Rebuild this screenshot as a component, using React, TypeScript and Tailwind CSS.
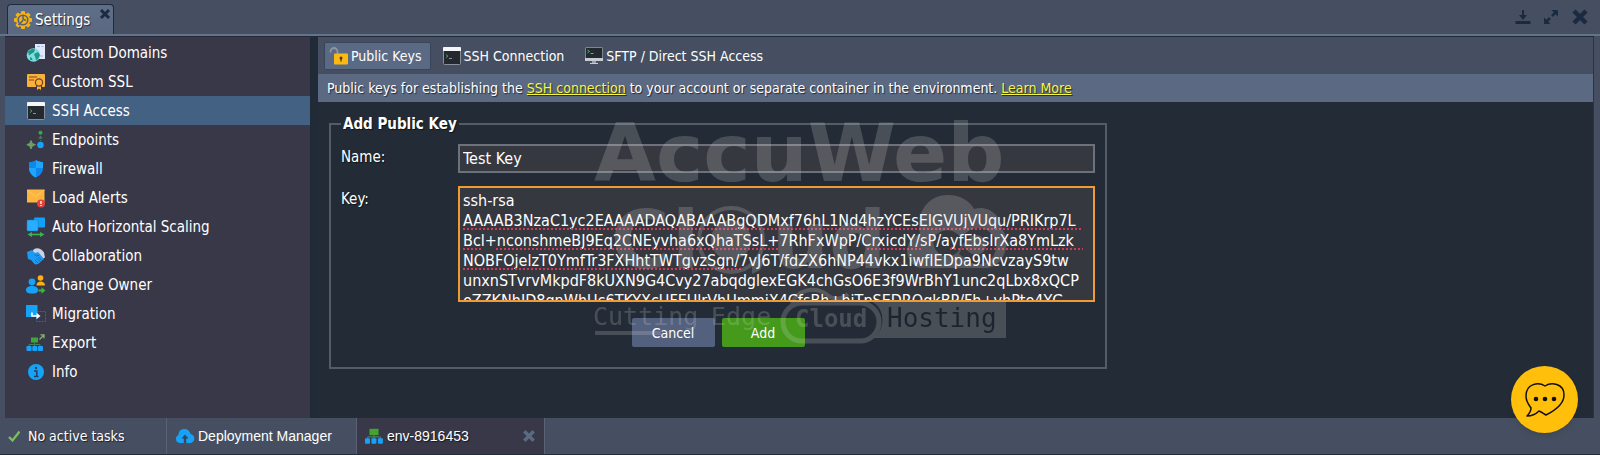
import { useState, type ReactNode } from 'react';
import clsx from 'clsx';

const PUBLIC_KEY = [
  'ssh-rsa',
  'AAAAB3NzaC1yc2EAAAADAQABAAABgQDMxf76hL1Nd4hzYCEsEIGVUjVUqu/PRIKrp7L',
  'Bcl+nconshmeBJ9Eq2CNEyvha6xQhaTSsL+7RhFxWpP/CrxicdY/sP/ayfEbsIrXa8YmLzk',
  'NOBFOjelzT0YmfTr3FXHhtTWTgvzSgn/7vJ6T/fdZX6hNP44vkx1iwfIEDpa9NcvzayS9tw',
  'unxnSTvrvMkpdF8kUXN9G4Cvy27abqdglexEGK4chGsO6E3f9WrBhY1unc2qLbx8xQCP',
  'eZZKNhID8gnWhUc6TKYXcUFEUlrVhUmmjX4CfsBh+hiTpSEDROgkBP/Fh+vhPte4YG',
].join('\n');

const Icon = ({ children, size = 20 }: { children: ReactNode; size?: number }) => (
  <svg width={size} height={size} viewBox="0 0 20 20" fill="none" className="shrink-0" aria-hidden="true">
    {children}
  </svg>
);

const GearIcon = () => (
  <Icon>
    <g fill="#f9b10e">
      <rect x="8" y="1" width="4" height="18" rx="1" />
      <rect x="8" y="1" width="4" height="18" rx="1" transform="rotate(45 10 10)" />
      <rect x="8" y="1" width="4" height="18" rx="1" transform="rotate(90 10 10)" />
      <rect x="8" y="1" width="4" height="18" rx="1" transform="rotate(135 10 10)" />
      <circle cx="10" cy="10" r="7" />
    </g>
    <circle cx="10" cy="10" r="4.8" stroke="#55627b" strokeWidth="1.6" />
    <path d="M5.5 15l4.6-4.8" stroke="#55627b" strokeWidth="1.6" />
    <path d="M10 5v4l3 1.6" stroke="#55627b" strokeWidth="1.5" />
  </Icon>
);

const DomainsIcon = () => (
  <Icon>
    <path d="M9 1h10v15h-7L9 12z" fill="#dfe9fb" />
    <path d="M11 3.5h3M15.5 3.5h2M13 13h4" stroke="#9fb3d8" strokeWidth="1" />
    <circle cx="7.5" cy="12" r="6.8" fill="#7fdbe6" />
    <path d="M2 8.5l4-2.7 3 .8-1 2.6-2.6 1.6L3 12.5zM8 11l4-2 2 3-2 4-2 1.4-.6-3zM4 14l2 1 .5 2.6L4 16.5z" fill="#1d9a7c" />
  </Icon>
);

const CertificateIcon = () => (
  <Icon>
    <rect x="1" y="2" width="18" height="13" rx="1" fill="#fbb03b" />
    <path d="M3 5h8M3 8h5" stroke="#7a4b1a" strokeWidth="1.2" />
    <path d="M10.5 13v6l2.5-2 2.5 2v-6z" fill="#fbb03b" stroke="#393849" strokeWidth="1" />
    <circle cx="13" cy="10.5" r="3.6" fill="#fbb03b" stroke="#6b4420" strokeWidth="1.2" />
  </Icon>
);

const TerminalIcon = () => (
  <Icon>
    <rect x="1.5" y="1.5" width="17" height="17" rx="1" fill="#23292f" stroke="#8a919b" />
    <path d="M1 2a1 1 0 0 1 1-1h16a1 1 0 0 1 1 1v3H1z" fill="#f3f5f8" />
    <path d="M4 8.5l2 1.6-2 1.6" stroke="#4f9463" strokeWidth="1" />
    <path d="M7 12.5h3" stroke="#8c929b" strokeWidth="1" />
  </Icon>
);

const MonitorIcon = () => (
  <Icon>
    <rect x="1.5" y="1.5" width="17" height="12" rx="0.5" fill="#23292f" stroke="#7d8590" />
    <rect x="1" y="12" width="18" height="3" fill="#c8ccd2" />
    <path d="M8 15h4v2h-4z" fill="#9aa1ab" />
    <path d="M6 17.5h8" stroke="#c8ccd2" />
    <path d="M3.5 4l2 1.4-2 1.4" stroke="#4fc06a" />
    <path d="M6.5 7.5h3" stroke="#4fc06a" />
  </Icon>
);

const LockIcon = () => (
  <Icon>
    <path d="M1.5 6.5V5.5a3.500 3.500 0 0 1 7 0V8" stroke="#8f96a3" strokeWidth="1.800" />
    <rect x="5" y="7.500" width="14" height="11" rx="1" fill="#fdb913" />
    <circle cx="12" cy="12" r="1.5" fill="#4d3a12" />
    <path d="M12 12v3.6" stroke="#4d3a12" strokeWidth="1.2" />
  </Icon>
);

const EndpointsIcon = () => (
  <Icon>
    <circle cx="14.5" cy="2.8" r="2" fill="#39a84a" />
    <path d="M14.5 5.500l-2.500 3h5z" fill="#58705f" />
    <path d="M14.5 8v4M9 14.7h3" stroke="#58705f" strokeDasharray="1 1" />
    <path d="M5 10.500l1.300 2.900 2.900 1.300-2.900 1.300L5 19l-1.300-3-2.900-1.300 2.900-1.300z" fill="#6f9d63" stroke="#6f9d63" />
    <circle cx="14.5" cy="15" r="3.2" fill="#15a3fa" />
  </Icon>
);

const ShieldIcon = () => (
  <Icon>
    <path d="M10 1c2 1.400 4.500 2 7 2v6c0 5-3.500 8-7 9.500C6.500 17 3 14 3 9V3c2.500 0 5-.6 7-2z" fill="#0d86ee" />
    <path d="M10 1c2 1.400 4.500 2 7 2v6h-7zM3 9h7v9.500C6.500 17 3.500 14.500 3 9z" fill="#1fa5fc" />
  </Icon>
);

const AlertIcon = () => (
  <Icon>
    <rect x="1" y="1.500" width="17.500" height="13" rx="0.500" fill="#fcb53f" />
    <path d="M1 2l8.700 6.500L18.500 2" stroke="#ffc765" strokeWidth="1" />
    <circle cx="15" cy="15.500" r="4" fill="#e0413a" />
    <path d="M15 13v3M15 17v1" stroke="#fff" strokeWidth="1.400" />
  </Icon>
);

const ScalingIcon = () => (
  <Icon>
    <rect x="8" y="0.500" width="11" height="10" rx="1" fill="#12a0fa" />
    <rect x="1" y="3" width="11" height="11" rx="1" fill="#27aefe" stroke="#2a74b8" strokeWidth="0.500" />
    <path d="M5 17.500h10" stroke="#39b54a" strokeWidth="1.600" />
    <path d="M6 15v5l-4.500-2.500zM14 15v5l4.500-2.500z" fill="#39b54a" />
  </Icon>
);

const HandshakeIcon = () => (
  <Icon>
    <path d="M6.500 5.500C8 1.500 14 .8 18 6.500l1 5-2 1-4-5-4 .5z" fill="#c9d3e2" />
    <path d="M1 6l5-2 3 3 3-1 6 7-2 1.500-2 2-2 1.500-3 .5L5 14l-3-1z" fill="#1a9bf7" />
    <path d="M8.500 8.500l2 1.500 2.500-1M9 14l3 3M11 12.500l3 3M12.500 11l3 3" stroke="#2a5f9c" strokeWidth="0.900" />
  </Icon>
);

const OwnerIcon = () => (
  <Icon>
    <circle cx="14.500" cy="3" r="2.800" fill="#fbb016" />
    <path d="M10.500 10.500c0-3 2-4 4-4s4.500 1 4.500 4z" fill="#fbb016" />
    <circle cx="6" cy="6.800" r="3.400" fill="#15a3fa" />
    <path d="M0 15c0-3 3-4 6-4s6 1 6 4c0 3-3 3.500-6 3.500S0 18 0 15z" fill="#15a3fa" />
    <path d="M12.500 15.500h4" stroke="#39b54a" strokeWidth="2" />
    <path d="M15.500 12.200v6.600l4-3.300z" fill="#39b54a" />
  </Icon>
);

const MigrationIcon = () => (
  <Icon>
    <rect x="10.500" y="7.500" width="9" height="10" stroke="#2a6d9e" strokeDasharray="2 1" />
    <rect x="0" y="1" width="11.500" height="12" rx="0.500" fill="#15a3fa" />
    <path d="M6 8.500v3.500h5" stroke="#fff" strokeWidth="1.600" />
    <path d="M10.500 8.700v6.600l4-3.300z" fill="#fff" />
  </Icon>
);

const ExportIcon = () => (
  <Icon>
    <rect x="5" y="4.500" width="7" height="5" fill="#39a935" />
    <path d="M8.500 9v5M3 14v-2.500h11V14" stroke="#4a7a55" />
    <path d="M13.500 6.500l4.500-4.500M14.500 1.800H18v3.500" stroke="#7fb56d" strokeWidth="1.300" />
    <rect x="0.500" y="13" width="5" height="5" rx="1" fill="#15a3fa" />
    <rect x="6.300" y="13" width="5" height="5" rx="1" fill="#15a3fa" />
    <rect x="12" y="13" width="5" height="5" rx="1" fill="#15a3fa" />
  </Icon>
);

const InfoIcon = () => (
  <Icon>
    <circle cx="10" cy="10" r="8" fill="#15a3fa" />
    <path d="M8 9h2.800v5M8 14.500h4.500" stroke="#23405e" strokeWidth="1.600" />
    <circle cx="10" cy="6" r="1.200" fill="#23405e" />
  </Icon>
);

const EnvIcon = () => (
  <Icon size={18}>
    <rect x="5" y="2" width="10" height="7" fill="#43a52f" />
    <path d="M10 9v4M3 13v-2h14v2" stroke="#5b8f62" />
    <rect x="0" y="12.500" width="5.500" height="6" rx="1" fill="#15a3fa" />
    <rect x="7.200" y="12.500" width="5.500" height="6" rx="1" fill="#15a3fa" />
    <rect x="14.400" y="12.500" width="5.500" height="6" rx="1" fill="#15a3fa" />
  </Icon>
);

const CloudUploadIcon = () => (
  <Icon>
    <path d="M4.500 17A4.200 4.200 0 0 1 3.500 9C3.500 5 6 3 9.500 3c3.200 0 5.500 2 6 5 2.200.3 3.800 2 3.800 4.500S17.500 17 15 17z" fill="#15a3fa" />
    <path d="M10 17v-5" stroke="#3b4558" strokeWidth="2.400" />
    <path d="M6.500 12.500L10 8.500l3.500 4z" fill="#3b4558" />
  </Icon>
);

const CrossIcon = ({ className, size }: { className: string; size: number }) => (
  <svg width={size} height={size} viewBox="0 0 12 12" className={className} aria-hidden="true">
    <path d="M2 2l8 8M10 2l-8 8" stroke="currentColor" strokeWidth="3" />
  </svg>
);

const menuItems = [
  { label: 'Custom Domains', icon: <DomainsIcon /> },
  { label: 'Custom SSL', icon: <CertificateIcon /> },
  { label: 'SSH Access', icon: <TerminalIcon /> },
  { label: 'Endpoints', icon: <EndpointsIcon /> },
  { label: 'Firewall', icon: <ShieldIcon /> },
  { label: 'Load Alerts', icon: <AlertIcon /> },
  { label: 'Auto Horizontal Scaling', icon: <ScalingIcon /> },
  { label: 'Collaboration', icon: <HandshakeIcon /> },
  { label: 'Change Owner', icon: <OwnerIcon /> },
  { label: 'Migration', icon: <MigrationIcon /> },
  { label: 'Export', icon: <ExportIcon /> },
  { label: 'Info', icon: <InfoIcon /> },
];

const tabs = [
  { label: 'Public Keys', icon: <LockIcon /> },
  { label: 'SSH Connection', icon: <TerminalIcon /> },
  { label: 'SFTP / Direct SSH Access', icon: <MonitorIcon /> },
];

const Header = () => (
  <header className="flex h-[34px] shrink-0 items-end justify-between pl-[7px]">
    <div className="relative flex h-[30px] w-[107px] items-center gap-0.5 rounded-t border border-b-0 border-[#1f2a3a] bg-linear-to-b from-[#5f6f89] to-[#5a6880] pl-[5px]">
      <GearIcon />
      <span>Settings</span>
      <button className="absolute top-[3px] right-[2px] text-[#1b2a40]" aria-label="Close Settings">
        <CrossIcon className="block" size={12} />
      </button>
    </div>
    <div className="flex h-full items-center gap-3 pr-[11px] text-[#1b2a40]">
      <button aria-label="Minimize">
        <svg width="16" height="16" viewBox="0 0 16 16" fill="none" className="block">
          <path d="M8 1v6" stroke="currentColor" strokeWidth="2" />
          <path d="M4 6h8l-4 5z" fill="currentColor" />
          <path d="M0.500 13.500h15" stroke="currentColor" strokeWidth="3" />
        </svg>
      </button>
      <button aria-label="Maximize">
        <svg width="16" height="16" viewBox="0 0 16 16" fill="none" className="block">
          <path d="M8.500 1H15v6.500zM1 8.500L7.500 15H1z" fill="currentColor" />
          <path d="M9 7l4-4M7 9l-4 4" stroke="currentColor" strokeWidth="2.500" />
        </svg>
      </button>
      <button aria-label="Close">
        <CrossIcon className="block" size={18} />
      </button>
    </div>
  </header>
);

const Sidebar = () => {
  const [selected, setSelected] = useState('SSH Access');

  return (
    <nav className="w-[305px] shrink-0 bg-[#393849] pt-px">
      {menuItems.map((item) => (
        <button
          key={item.label}
          onClick={() => setSelected(item.label)}
          className={clsx(
            'flex h-[29px] w-full items-center gap-[6px] pl-[21px] text-left',
            selected === item.label && 'bg-[#436183]',
          )}
        >
          {item.icon}
          {item.label}
        </button>
      ))}
    </nav>
  );
};

// Spellchecker marks under the wrapped key, one entry for each run of dots
const spellMarks = [
  [0, 38, 620],
  [0, 58, 20],
  [33, 58, 317],
  [404, 58, 460],
  [487, 58, 620],
  [0, 78, 278],
];

const Watermark = () => (
  <svg
    width="420"
    height="240"
    viewBox="590 110 420 240"
    className="pointer-events-none absolute -top-[2px] left-[261px] overflow-visible opacity-20 text-shadow-none"
    aria-hidden="true"
  >
    <g fill="#dcdcdc">
      <text x="594" y="181" fontFamily="DejaVu Sans" fontWeight="700" fontSize="80">AccuWeb</text>
      <text x="611" y="268" fontFamily="DejaVu Sans" fontWeight="700" fontSize="80">C</text>
      <text x="672" y="268" fontFamily="DejaVu Sans" fontWeight="700" fontSize="80">l</text>
      <circle cx="731" cy="240" r="32" fill="none" stroke="#dcdcdc" strokeWidth="4" />
      <circle cx="731" cy="240" r="20" />
      <path d="M752 264l14-8-6 14-8 4z" />
      <text x="772" y="268" fontFamily="DejaVu Sans" fontWeight="700" fontSize="80">ud</text>
      <path
        fillRule="evenodd"
        d="M920 268c-16-4-18-28 0-34-4-22 8-39 28-39 12 0 22 6 26 14 14-4 27 6 28 20 10 14 2 36-14 39zM935 236a14 14 0 1 0 26 10l8-8a10 10 0 1 1 0 14l-6-6-4 8 8 6a18 18 0 1 0 0-28l-6 6a16 16 0 0 0-26-2z"
      />
      <text x="593" y="325" fontFamily="DejaVu Sans Mono" fontSize="25">Cutting</text>
      <text x="711" y="325" fontFamily="DejaVu Sans Mono" fontSize="25">Edge</text>
      <rect x="595" y="331" width="66" height="4" />
      <path d="M872 302h134v36H872c14-6 14-30 0-36z" />
      <rect x="783" y="303" width="96" height="38" rx="19" fill="none" stroke="#dcdcdc" strokeWidth="5" />
      <path d="M792 304c4-14 22-18 34-10 6 6 16 6 22 0" fill="none" stroke="#dcdcdc" strokeWidth="4" />
      <text x="795" y="327" fontFamily="DejaVu Sans Mono" fontWeight="700" fontSize="24">Cloud</text>
    </g>
    <text x="887" y="327" fontFamily="DejaVu Sans Mono" fontSize="26" fill="#000818">Hosting</text>
  </svg>
);

const PublicKeyForm = () => {
  const [name, setName] = useState('Test Key');
  const [key, setKey] = useState(PUBLIC_KEY);

  return (
    <form className="relative w-full max-w-[778px]" onSubmit={(e) => e.preventDefault()}>
      <fieldset className="border-2 border-[#535d68] px-[10px] pb-5">
        <legend className="px-0.5 leading-6 font-bold">Add Public Key</legend>
        <div className="mt-2 flex">
          <label htmlFor="key-name" className="w-[117px] shrink-0 pt-[3px]">Name:</label>
          <input
            id="key-name"
            value={name}
            onChange={(e) => setName(e.target.value)}
            className="h-[29px] min-w-0 flex-1 border-2 border-[#6c717c] bg-[#363840] px-[3px] text-base outline-none"
          />
        </div>
        <div className="mt-[13px] flex">
          <label htmlFor="key-value" className="w-[117px] shrink-0 pt-[3px]">Key:</label>
          <div className="relative flex min-w-0 flex-1">
            <textarea
              id="key-value"
              value={key}
              spellCheck={false}
              onChange={(e) => setKey(e.target.value)}
              className="h-[116px] w-full resize-none overflow-hidden border-2 border-[#ee9a35] bg-[#363840] px-[3px] py-[3px] text-base leading-5 whitespace-pre outline-none"
            />
            <svg width="628" height="100" className="pointer-events-none absolute top-[5px] left-[5px]" aria-hidden="true">
              {spellMarks.map(([x1, y, x2]) => (
                <path key={`${x1}-${y}`} d={`M${x1} ${y}H${x2}`} stroke="#d03a55" strokeWidth="2" strokeDasharray="2 2" />
              ))}
            </svg>
          </div>
        </div>
        <div className="mt-4 flex justify-center gap-[7px] text-sm">
          <button type="button" className="h-[29px] w-[83px] rounded-xs bg-[#53617f]">Cancel</button>
          <button type="submit" className="h-[29px] w-[83px] rounded-xs bg-[#459a1c]">Add</button>
        </div>
      </fieldset>
      <Watermark />
    </form>
  );
};

const MainPanel = () => {
  const [activeTab, setActiveTab] = useState('Public Keys');

  return (
    <main className="flex min-w-0 flex-1 flex-col border-r border-[#2a3444] bg-[#232c36]">
      <div className="flex h-[37px] items-center gap-[6px] bg-[#464f61] pl-[6px] text-sm">
        {tabs.map((tab) => (
          <button
            key={tab.label}
            onClick={() => setActiveTab(tab.label)}
            className={clsx(
              'flex h-7 items-center gap-0.5 rounded-xs border pr-2 pl-1',
              activeTab === tab.label ? 'border-[#394559] bg-[#5b6a84]' : 'border-transparent',
            )}
          >
            {tab.icon}
            {tab.label}
          </button>
        ))}
      </div>
      <p className="flex h-7 items-center bg-[#5b6983] pl-[9px] text-sm whitespace-pre">
        Public keys for establishing the <a href="#ssh" className="text-[#f5f542] underline">SSH connection</a> to your account or separate container in the environment. <a href="#more" className="text-[#f5f542] underline">Learn More</a>
      </p>
      <div className="px-[11px] pt-[10px]">
        <PublicKeyForm />
      </div>
    </main>
  );
};

const TaskBar = () => (
  <footer className="flex h-[37px] shrink-0 border-b border-[#242d3a] bg-[#464f61] text-sm">
    <div className="flex w-[167px] items-center gap-2 border-r border-[#5a6375] pl-2">
      <svg width="12" height="12" viewBox="0 0 12 12" fill="none" aria-hidden="true">
        <path d="M1 7l3.500 3.500L11.500 1.500" stroke="#7cc05a" strokeWidth="2.200" />
      </svg>
      No active tasks
    </div>
    <button className="flex w-[190px] items-center gap-[3px] border-r border-[#5a6375] pl-2 font-['Liberation_Sans',sans-serif]">
      <CloudUploadIcon />
      Deployment Manager
    </button>
    <div className="flex w-[188px] items-center gap-1 border-r border-[#5a6375] bg-[#393849] pr-[8px] pl-2 font-['Liberation_Sans',sans-serif]">
      <EnvIcon />
      <span className="flex-1">env-8916453</span>
      <button className="text-[#5a6a80]" aria-label="Close env-8916453">
        <CrossIcon className="block" size={14} />
      </button>
    </div>
  </footer>
);

const App = () => (
  <div className="flex min-h-screen flex-col bg-[#464f61] font-['DejaVu_Sans_Condensed','DejaVu_Sans',sans-serif] text-[15px] leading-5 text-white [text-shadow:1px_1px_1px_rgb(0_0_0/0.600)]">
    <Header />
    <div className="flex flex-1 border-t-2 border-[#65738a] pr-[6px] pl-[5px]">
      <div className="flex min-w-0 flex-1 gap-2 border-t border-[#202a38] bg-[#212b37]">
        <Sidebar />
        <MainPanel />
      </div>
    </div>
    <TaskBar />
    <button
      className="fixed right-[22px] bottom-[22px] flex size-[67px] items-center justify-center rounded-full bg-[#ffbf0a] shadow-md"
      aria-label="Open chat"
    >
      <svg width="42" height="36" viewBox="0 0 42 36" fill="none" aria-hidden="true">
        <path
          d="M21 4C15 0 2 1 2 14c0 6 3 9 5 12 0 3-1 5-4 8 5 0 9-2 12-5 3 1 5 3 7 4 8-4 18-11 18-20C40 1 27 0 21 4z"
          stroke="#111"
          strokeWidth="1.500"
          strokeLinejoin="round"
        />
        <circle cx="12" cy="17" r="2.300" fill="#111" />
        <circle cx="21" cy="17" r="2.300" fill="#111" />
        <circle cx="30" cy="17" r="2.300" fill="#111" />
      </svg>
    </button>
  </div>
);

export default App;
